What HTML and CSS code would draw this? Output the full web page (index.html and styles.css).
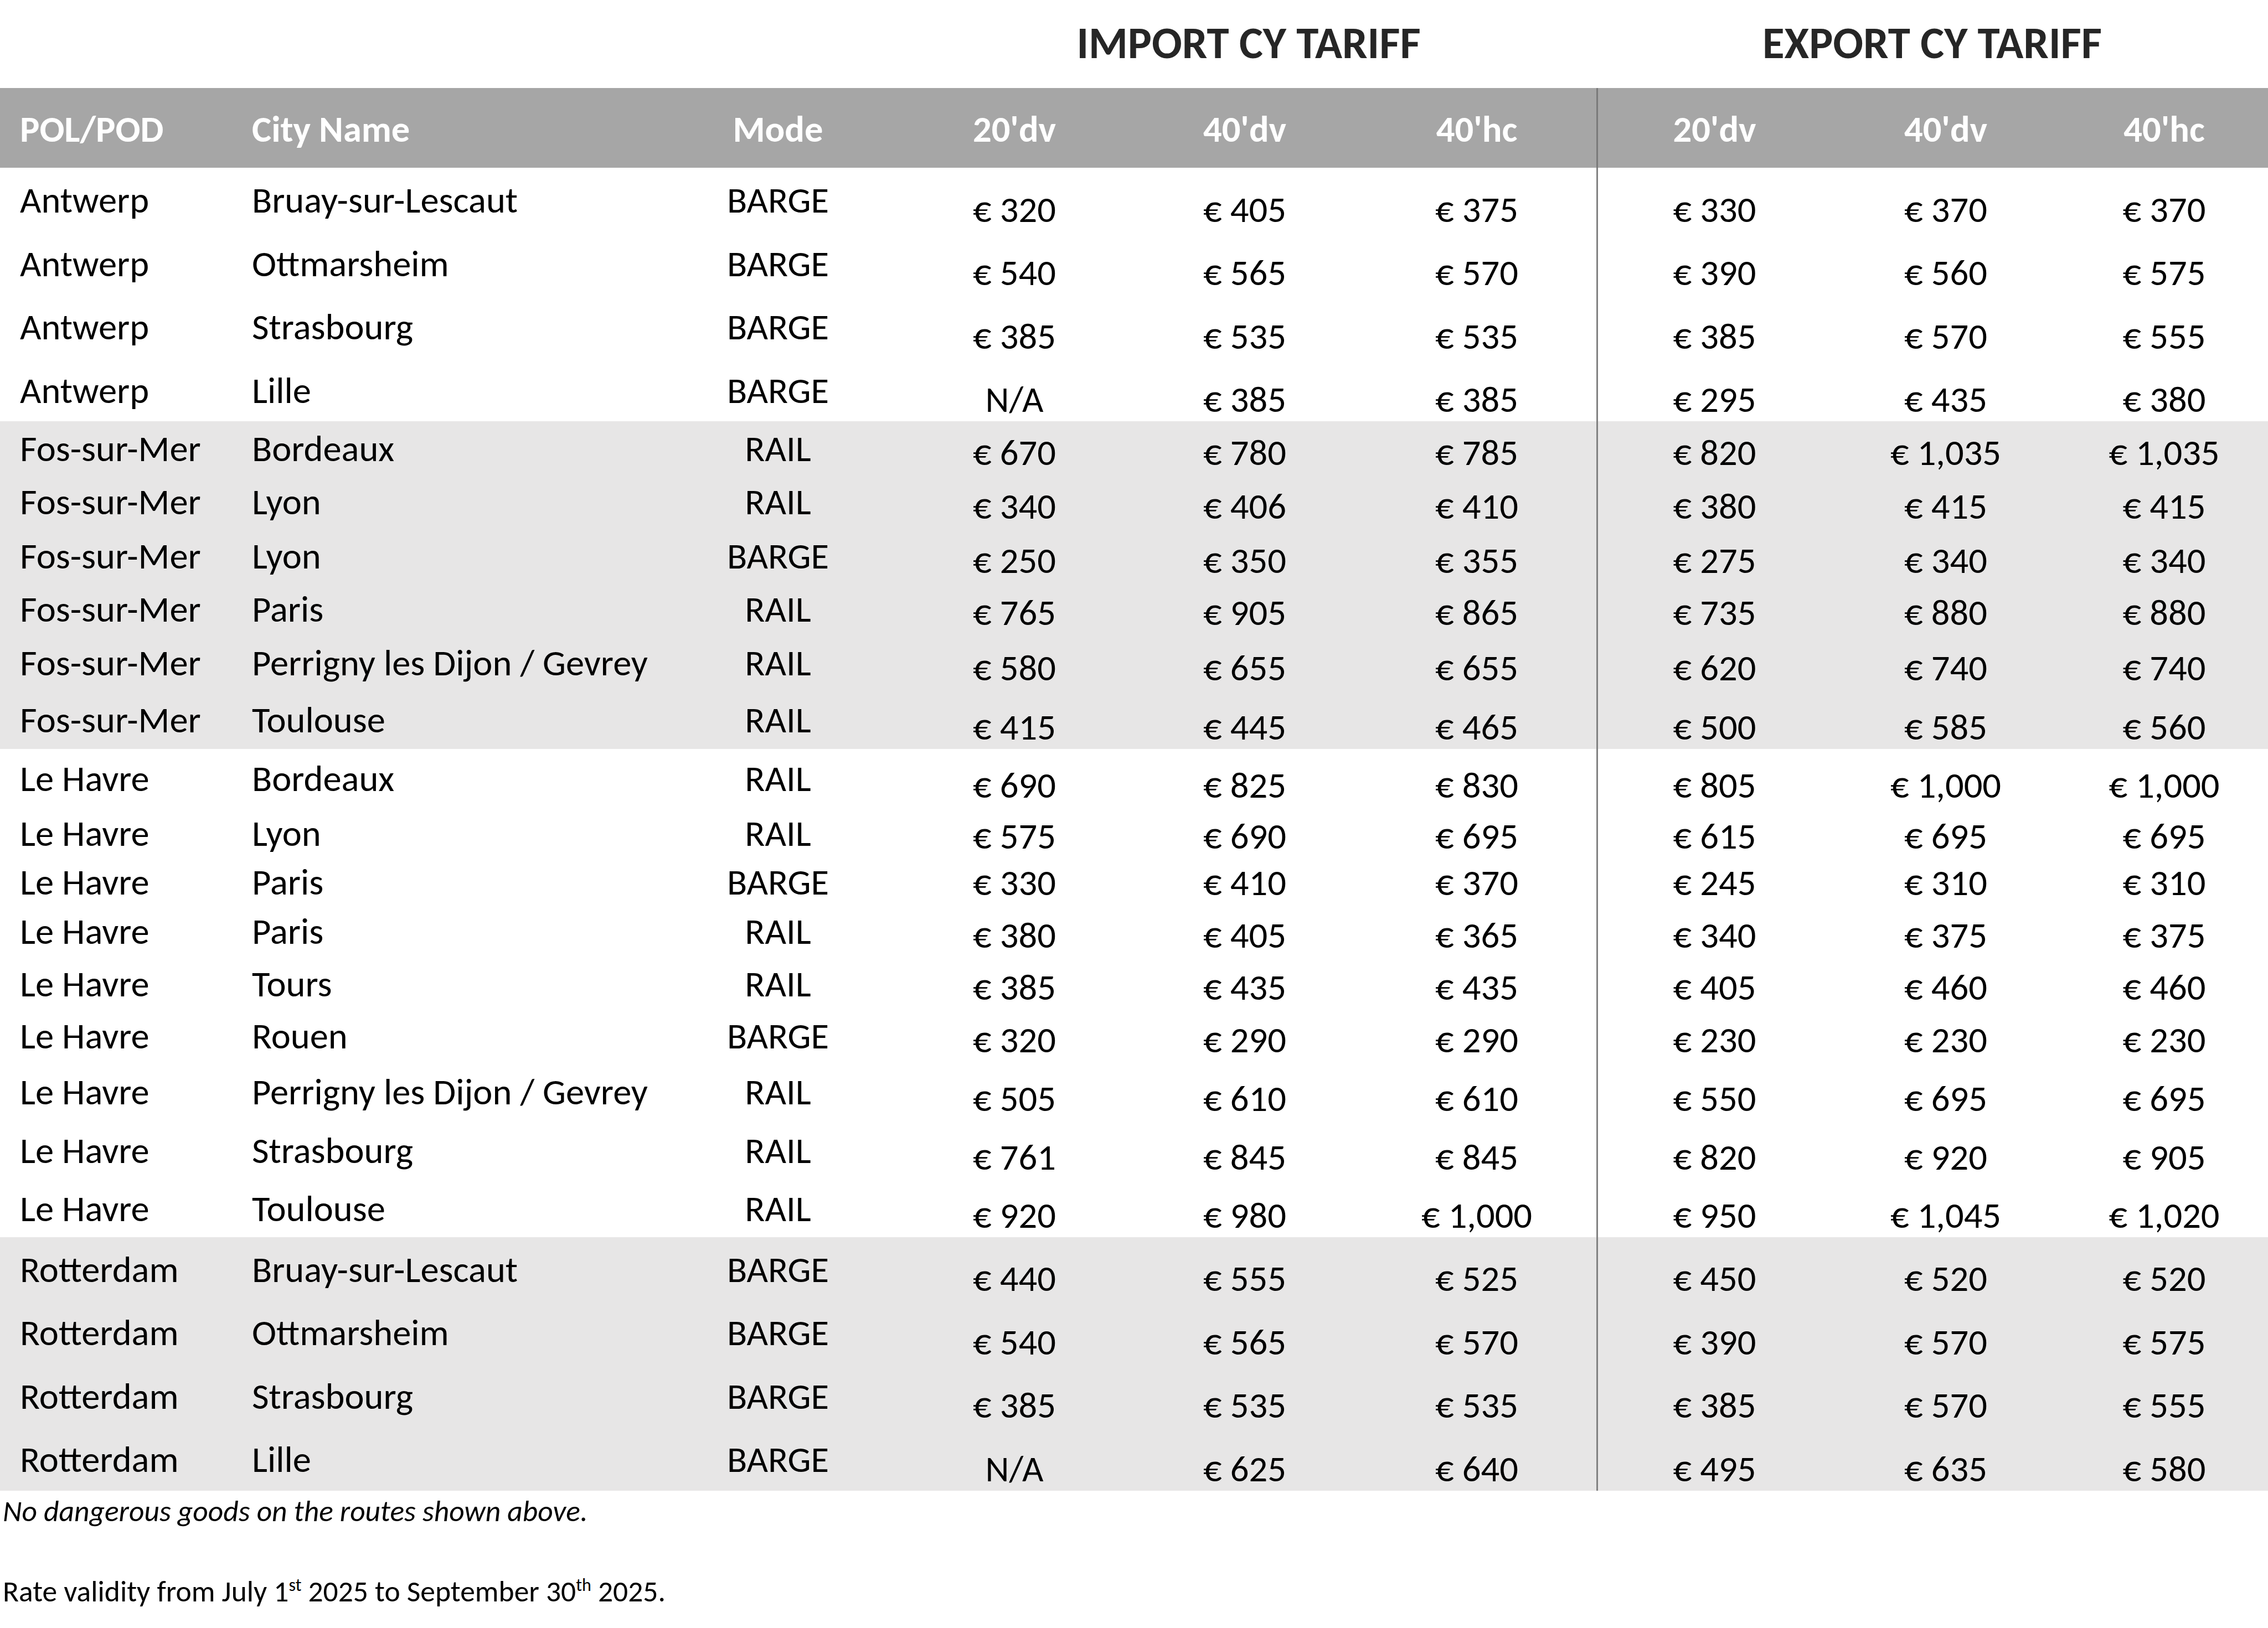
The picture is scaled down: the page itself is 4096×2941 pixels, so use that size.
FILE: index.html
```html
<!DOCTYPE html>
<html lang="en">
<head>
<meta charset="utf-8">
<title>CY Tariff</title>
<link rel="stylesheet" href="styles.css">
</head>
<body>
<div class="sheet">
  <div class="titles">
    <div class="title t-import">IMPORT CY TARIFF</div>
    <div class="title t-export">EXPORT CY TARIFF</div>
  </div>
  <div class="tariff">
    <div class="row head">
      <div class="c l">POL/POD</div><div class="c l2">City Name</div><div class="c m">Mode</div>
      <div class="c n">20'dv</div><div class="c n">40'dv</div><div class="c n n6">40'hc</div>
      <div class="c n div">20'dv</div><div class="c n">40'dv</div><div class="c n">40'hc</div>
    </div>

    <div class="grp">
      <div class="row h-xl"><div class="c l t">Antwerp</div><div class="c l2 t">Bruay-sur-Lescaut</div><div class="c m t">BARGE</div><div class="c n v">€ 320</div><div class="c n v">€ 405</div><div class="c n n6 v">€ 375</div><div class="c n div v">€ 330</div><div class="c n v">€ 370</div><div class="c n v">€ 370</div></div>
      <div class="row h-xl"><div class="c l t">Antwerp</div><div class="c l2 t">Ottmarsheim</div><div class="c m t">BARGE</div><div class="c n v">€ 540</div><div class="c n v">€ 565</div><div class="c n n6 v">€ 570</div><div class="c n div v">€ 390</div><div class="c n v">€ 560</div><div class="c n v">€ 575</div></div>
      <div class="row h-xl"><div class="c l t">Antwerp</div><div class="c l2 t">Strasbourg</div><div class="c m t">BARGE</div><div class="c n v">€ 385</div><div class="c n v">€ 535</div><div class="c n n6 v">€ 535</div><div class="c n div v">€ 385</div><div class="c n v">€ 570</div><div class="c n v">€ 555</div></div>
      <div class="row h-xl"><div class="c l t">Antwerp</div><div class="c l2 t">Lille</div><div class="c m t">BARGE</div><div class="c n v">N/A</div><div class="c n v">€ 385</div><div class="c n n6 v">€ 385</div><div class="c n div v">€ 295</div><div class="c n v">€ 435</div><div class="c n v">€ 380</div></div>
    </div>

    <div class="grp shade">
      <div class="row f1"><div class="c l t">Fos-sur-Mer</div><div class="c l2 t">Bordeaux</div><div class="c m t">RAIL</div><div class="c n v">€ 670</div><div class="c n v">€ 780</div><div class="c n n6 v">€ 785</div><div class="c n div v">€ 820</div><div class="c n v">€ 1,035</div><div class="c n v">€ 1,035</div></div>
      <div class="row f2"><div class="c l t">Fos-sur-Mer</div><div class="c l2 t">Lyon</div><div class="c m t">RAIL</div><div class="c n v">€ 340</div><div class="c n v">€ 406</div><div class="c n n6 v">€ 410</div><div class="c n div v">€ 380</div><div class="c n v">€ 415</div><div class="c n v">€ 415</div></div>
      <div class="row f3"><div class="c l t">Fos-sur-Mer</div><div class="c l2 t">Lyon</div><div class="c m t">BARGE</div><div class="c n v">€ 250</div><div class="c n v">€ 350</div><div class="c n n6 v">€ 355</div><div class="c n div v">€ 275</div><div class="c n v">€ 340</div><div class="c n v">€ 340</div></div>
      <div class="row f4"><div class="c l t">Fos-sur-Mer</div><div class="c l2 t">Paris</div><div class="c m t">RAIL</div><div class="c n v">€ 765</div><div class="c n v">€ 905</div><div class="c n n6 v">€ 865</div><div class="c n div v">€ 735</div><div class="c n v">€ 880</div><div class="c n v">€ 880</div></div>
      <div class="row f5"><div class="c l t">Fos-sur-Mer</div><div class="c l2 t">Perrigny les Dijon / Gevrey</div><div class="c m t">RAIL</div><div class="c n v">€ 580</div><div class="c n v">€ 655</div><div class="c n n6 v">€ 655</div><div class="c n div v">€ 620</div><div class="c n v">€ 740</div><div class="c n v">€ 740</div></div>
      <div class="row f6"><div class="c l t">Fos-sur-Mer</div><div class="c l2 t">Toulouse</div><div class="c m t">RAIL</div><div class="c n v">€ 415</div><div class="c n v">€ 445</div><div class="c n n6 v">€ 465</div><div class="c n div v">€ 500</div><div class="c n v">€ 585</div><div class="c n v">€ 560</div></div>
    </div>

    <div class="grp">
      <div class="row h1"><div class="c l t">Le Havre</div><div class="c l2 t">Bordeaux</div><div class="c m t">RAIL</div><div class="c n v">€ 690</div><div class="c n v">€ 825</div><div class="c n n6 v">€ 830</div><div class="c n div v">€ 805</div><div class="c n v">€ 1,000</div><div class="c n v">€ 1,000</div></div>
      <div class="row h2"><div class="c l t">Le Havre</div><div class="c l2 t">Lyon</div><div class="c m t">RAIL</div><div class="c n v">€ 575</div><div class="c n v">€ 690</div><div class="c n n6 v">€ 695</div><div class="c n div v">€ 615</div><div class="c n v">€ 695</div><div class="c n v">€ 695</div></div>
      <div class="row h3"><div class="c l t">Le Havre</div><div class="c l2 t">Paris</div><div class="c m t">BARGE</div><div class="c n v">€ 330</div><div class="c n v">€ 410</div><div class="c n n6 v">€ 370</div><div class="c n div v">€ 245</div><div class="c n v">€ 310</div><div class="c n v">€ 310</div></div>
      <div class="row h4"><div class="c l t">Le Havre</div><div class="c l2 t">Paris</div><div class="c m t">RAIL</div><div class="c n v">€ 380</div><div class="c n v">€ 405</div><div class="c n n6 v">€ 365</div><div class="c n div v">€ 340</div><div class="c n v">€ 375</div><div class="c n v">€ 375</div></div>
      <div class="row h4"><div class="c l t">Le Havre</div><div class="c l2 t">Tours</div><div class="c m t">RAIL</div><div class="c n v">€ 385</div><div class="c n v">€ 435</div><div class="c n n6 v">€ 435</div><div class="c n div v">€ 405</div><div class="c n v">€ 460</div><div class="c n v">€ 460</div></div>
      <div class="row h4"><div class="c l t">Le Havre</div><div class="c l2 t">Rouen</div><div class="c m t">BARGE</div><div class="c n v">€ 320</div><div class="c n v">€ 290</div><div class="c n n6 v">€ 290</div><div class="c n div v">€ 230</div><div class="c n v">€ 230</div><div class="c n v">€ 230</div></div>
      <div class="row h7"><div class="c l t">Le Havre</div><div class="c l2 t">Perrigny les Dijon / Gevrey</div><div class="c m t">RAIL</div><div class="c n v">€ 505</div><div class="c n v">€ 610</div><div class="c n n6 v">€ 610</div><div class="c n div v">€ 550</div><div class="c n v">€ 695</div><div class="c n v">€ 695</div></div>
      <div class="row h8"><div class="c l t">Le Havre</div><div class="c l2 t">Strasbourg</div><div class="c m t">RAIL</div><div class="c n v">€ 761</div><div class="c n v">€ 845</div><div class="c n n6 v">€ 845</div><div class="c n div v">€ 820</div><div class="c n v">€ 920</div><div class="c n v">€ 905</div></div>
      <div class="row h9"><div class="c l t">Le Havre</div><div class="c l2 t">Toulouse</div><div class="c m t">RAIL</div><div class="c n v">€ 920</div><div class="c n v">€ 980</div><div class="c n n6 v">€ 1,000</div><div class="c n div v">€ 950</div><div class="c n v">€ 1,045</div><div class="c n v">€ 1,020</div></div>
    </div>

    <div class="grp shade">
      <div class="row h-xl"><div class="c l t">Rotterdam</div><div class="c l2 t">Bruay-sur-Lescaut</div><div class="c m t">BARGE</div><div class="c n v">€ 440</div><div class="c n v">€ 555</div><div class="c n n6 v">€ 525</div><div class="c n div v">€ 450</div><div class="c n v">€ 520</div><div class="c n v">€ 520</div></div>
      <div class="row h-xl"><div class="c l t">Rotterdam</div><div class="c l2 t">Ottmarsheim</div><div class="c m t">BARGE</div><div class="c n v">€ 540</div><div class="c n v">€ 565</div><div class="c n n6 v">€ 570</div><div class="c n div v">€ 390</div><div class="c n v">€ 570</div><div class="c n v">€ 575</div></div>
      <div class="row h-xl"><div class="c l t">Rotterdam</div><div class="c l2 t">Strasbourg</div><div class="c m t">BARGE</div><div class="c n v">€ 385</div><div class="c n v">€ 535</div><div class="c n n6 v">€ 535</div><div class="c n div v">€ 385</div><div class="c n v">€ 570</div><div class="c n v">€ 555</div></div>
      <div class="row h-xl"><div class="c l t">Rotterdam</div><div class="c l2 t">Lille</div><div class="c m t">BARGE</div><div class="c n v">N/A</div><div class="c n v">€ 625</div><div class="c n n6 v">€ 640</div><div class="c n div v">€ 495</div><div class="c n v">€ 635</div><div class="c n v">€ 580</div></div>
    </div>
  </div>
  <p class="note">No dangerous goods on the routes shown above.</p>
  <p class="validity">Rate validity from July 1<sup>st</sup> 2025 to September 30<sup>th</sup> 2025.</p>
</div>
</body>
</html>
```

FILE: styles.css
```css
html, body {
  margin: 0;
  padding: 0;
  background: #ffffff;
}

.sheet {
  width: 4096px;
  font-family: "Carlito", "Lato", "Liberation Sans", sans-serif;
  color: #000000;
  font-size: 66.5px;
}

.titles {
  display: grid;
  grid-template-columns: 1627px 1256px 1213px;
  height: 159px;
}
.title {
  font-weight: 700;
  font-size: 81px;
  line-height: 1;
  color: #262626;
  text-align: center;
  padding-top: 37px;
}
.t-import { grid-column: 2; }
.t-export { grid-column: 3; }

.row {
  display: grid;
  grid-template-columns: 454px 729px 444px 410px 422px 424px 424px 414px 1fr;
  line-height: 1;
}

.c {
  white-space: nowrap;
}
.l { padding-left: 36px; }
.l2 { padding-left: 1px; }
.m, .n { text-align: center; }
.n6 { padding-right: 8px; }
.div { border-left: 3px solid #828282; }

.head {
  height: 144.3px;
  background: #a6a6a6;
  color: #ffffff;
  font-weight: 700;
}
.head .c {
  padding-top: 41.6px;
}
.head .div { border-left-color: #7a7a7a; }

.shade { background: #e7e6e6; }

.t {
  align-self: center;
  padding-top: 3.6px;
}
.v {
  align-self: end;
  padding-bottom: 5.4px;
}
.div.t, .div.v { align-self: stretch; }
.row .div {
  display: flex;
  justify-content: center;
  align-items: flex-end;
}
.head .div { align-items: flex-start; }

.h-xl { height: 114.5px; }
.f1 { height: 96px; }
.f2 { height: 96.5px; }
.f3 { height: 98.5px; }
.f4 { height: 93.5px; }
.f5 { height: 100.5px; }
.f6 { height: 106.5px; }
.h1 { height: 105px; }
.h2 { height: 92.5px; }
.h3 { height: 84px; }
.h4 { height: 94.5px; }
.h7 { height: 106.5px; }
.h8 { height: 105.5px; }
.h9 { height: 105px; }

.note, .validity {
  margin: 0;
  padding-left: 5px;
  font-size: 53.5px;
  line-height: 1;
}
.note {
  font-style: italic;
  margin-top: 10px;
}
.validity {
  margin-top: 92px;
}
.validity sup {
  font-size: 0.6em;
  line-height: 0;
  vertical-align: 0.6em;
}
```
